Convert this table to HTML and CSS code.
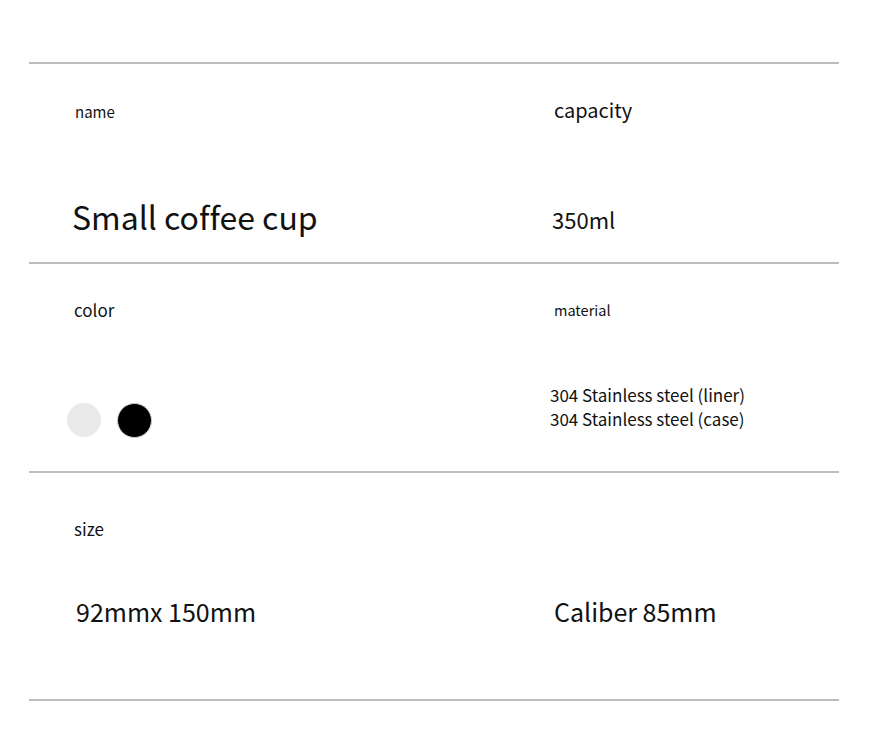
FILE: index.html
```html
<!DOCTYPE html>
<html>
<head>
<meta charset="utf-8">
<link rel="stylesheet" href="styles.css">
</head>
<body>
<div class="specs">
  <div class="row row-1">
    <div class="cell cell-left">
      <div class="label label-name">name</div>
      <div class="value value-name">Small coffee cup</div>
    </div>
    <div class="cell cell-right">
      <div class="label label-capacity">capacity</div>
      <div class="value value-capacity">350ml</div>
    </div>
  </div>
  <div class="row row-2">
    <div class="cell cell-left">
      <div class="label label-color">color</div>
      <div class="swatches">
        <span class="swatch swatch-white"></span>
        <span class="swatch swatch-black"></span>
      </div>
    </div>
    <div class="cell cell-right">
      <div class="label label-material">material</div>
      <div class="value value-material">304 Stainless steel (liner)<br>304 Stainless steel (case)</div>
    </div>
  </div>
  <div class="row row-3">
    <div class="cell cell-left">
      <div class="label label-size">size</div>
      <div class="value value-size">92mmx 150mm</div>
    </div>
    <div class="cell cell-right">
      <div class="value value-caliber">Caliber 85mm</div>
    </div>
  </div>
</div>
</body>
</html>
```

FILE: styles.css
```css
html, body {
  margin: 0;
  padding: 0;
  background: #ffffff;
}

body {
  font-family: "Noto Sans CJK SC", "Noto Sans", sans-serif;
  color: #111111;
  font-variant-ligatures: none;
}

.specs {
  width: 810px;
  margin: 62px 0 0 29px;
  border-top: 2px solid #bdbdbd;
}

.row {
  display: grid;
  grid-template-columns: 523px 1fr;
  border-bottom: 2px solid #bdbdbd;
}

.row-1 { height: 198px; }
.row-2 { height: 207px; }
.row-3 { height: 226px; }

.cell {
  display: flex;
  flex-direction: column;
  align-items: flex-start;
}

.cell-left { padding-left: 45px; }

.label, .value {
  line-height: 1;
  white-space: nowrap;
}

.label-name { font-size: 15px; margin-top: 40px; margin-left: 1px; }
.value-name { font-size: 32px; margin-top: 81px; margin-left: -2px; }

.label-capacity { font-size: 20px; margin-top: 36px; margin-left: 2px; }
.value-capacity { font-size: 22px; margin-top: 88px; }

.label-color { font-size: 17px; margin-top: 37px; }
.swatches {
  display: flex;
  gap: 16px;
  margin-top: 85px;
  margin-left: -7px;
}
.swatch {
  width: 34px;
  height: 34px;
  border-radius: 50%;
  box-sizing: border-box;
}
.swatch-white { background: #e9e9e9; }
.swatch-black { background: #000000; border: 1px solid #cfcfcf; width: 35px; height: 35px; }

.label-material { font-size: 14.5px; margin-top: 39px; margin-left: 2px; }
.value-material { font-size: 17px; line-height: 24px; margin-top: 65px; margin-left: -2px; }

.label-size { font-size: 17px; margin-top: 47px; }
.value-size { font-size: 25px; margin-top: 62px; margin-left: 2px; }

.value-caliber { font-size: 25px; margin-top: 126px; margin-left: 2px; }
```
